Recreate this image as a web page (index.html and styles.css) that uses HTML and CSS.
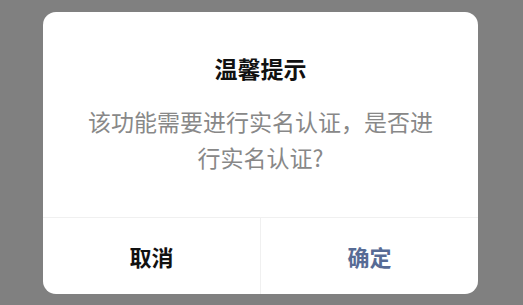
FILE: index.html
```html
<!DOCTYPE html>
<html lang="zh-CN">
<head>
<meta charset="utf-8">
<link rel="stylesheet" href="styles.css">
</head>
<body>
<div class="dialog">
  <div class="content">
    <div class="title">温馨提示</div>
    <div class="message">该功能需要进行实名认证，是否进行实名认证?</div>
  </div>
  <div class="actions">
    <div class="btn cancel">取消</div>
    <div class="btn confirm">确定</div>
  </div>
</div>
</body>
</html>
```
FILE: styles.css
```css
html, body {
  margin: 0;
  padding: 0;
}
body {
  background: #808080;
  width: 523px;
  height: 305px;
  overflow: hidden;
  font-family: "Noto Sans CJK SC", "Noto Sans", sans-serif;
}
.dialog {
  margin: 12px 0 0 43px;
  width: 435px;
  height: 282px;
  background: #ffffff;
  border-radius: 13px;
  display: flex;
  flex-direction: column;
  overflow: hidden;
}
.content {
  height: 205px;
  box-sizing: border-box;
  padding: 41px 43px 0;
  text-align: center;
}
.title {
  font-size: 23px;
  line-height: 30px;
  font-weight: 700;
  color: #111111;
}
.message {
  margin-top: 20px;
  font-size: 23px;
  line-height: 36px;
  color: #888888;
}
.actions {
  flex: 1;
  display: flex;
  border-top: 1px solid #f0f0f0;
}
.btn {
  flex: 1;
  display: flex;
  align-items: center;
  justify-content: center;
  font-size: 22px;
  font-weight: 700;
}
.cancel {
  color: #111111;
  border-right: 1px solid #f0f0f0;
}
.confirm {
  color: #576b95;
}
```
